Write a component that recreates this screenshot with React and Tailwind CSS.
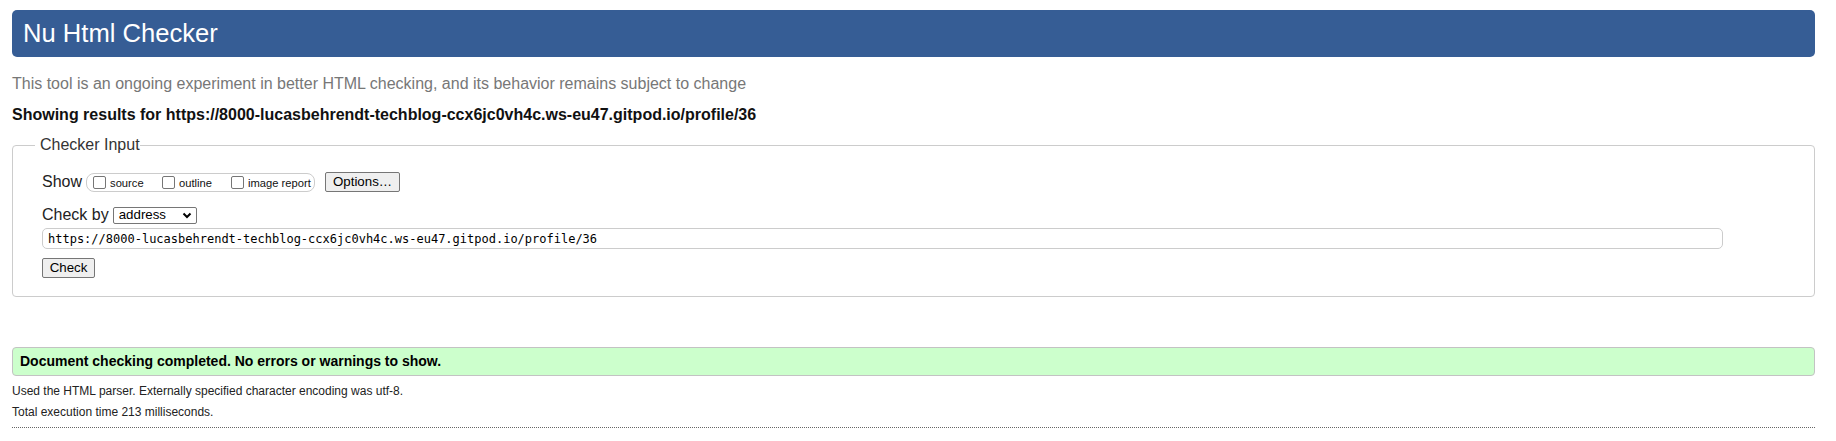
import React from "react";

const url = "https://8000-lucasbehrendt-techblog-ccx6jc0vh4c.ws-eu47.gitpod.io/profile/36";

function Box({ label, width }) {
  return (
    <span className={`flex items-center ${width}`}>
      <span className="w-[13px] h-[13px] border border-[#767676] rounded-[2px] bg-white shrink-0" />
      <span className="ml-[4px] text-[11.2px] leading-[13px] pt-[2px] text-[#111]">{label}</span>
    </span>
  );
}

export default function App() {
  return (
    <div className="w-full h-[441px] bg-white pl-[12px] pr-[21px] pt-[10px] font-['Liberation_Sans',Arial,sans-serif] text-[#222]">
      <div className="h-[47px] rounded-[5px] bg-[#365d95] flex items-center pl-[11px]">
        <h1 className="text-white text-[25.6px] leading-none">Nu Html Checker</h1>
      </div>

      <p className="mt-[17px] text-[16px] leading-[20px] text-[#777]">
        This tool is an ongoing experiment in better HTML checking, and its behavior remains subject to change
      </p>
      <p className="mt-[11px] text-[16px] leading-[20px] font-bold text-[#111]">
        Showing results for {url}
      </p>

      <fieldset className="mt-[10px] border border-[#ccc] rounded-[4px] pl-[29px] pt-[17px] pb-[18px]">
        <legend className="-ml-[7px] pl-[5px] text-[16px] leading-[20px] text-[#333]">Checker Input</legend>

        <div className="flex items-center h-[20px]">
          <span className="text-[16px] text-[#222]">Show</span>
          <div className="ml-[4px] h-[19px] w-[229px] border border-[#ccc] rounded-[8px] flex items-center pl-[6px]">
            <Box label="source" width="w-[69px]" />
            <Box label="outline" width="w-[69px]" />
            <Box label="image report" width="" />
          </div>
          <button className="ml-[10px] h-[20px] w-[75px] bg-[#efefef] border border-[#767676] rounded-[2px] text-[13.3px] leading-none text-black">
            Options…
          </button>
        </div>

        <div className="flex items-center h-[20px] mt-[13px]">
          <span className="text-[16px] text-[#222]">Check by</span>
          <div className="ml-[4px] h-[17px] w-[84px] border border-[#767676] rounded-[2px] flex items-center justify-between pl-[5px] pr-[4px] bg-white">
            <span className="text-[13.3px] leading-none text-black">address</span>
            <svg width="10" height="7" viewBox="0 0 10 7">
              <path d="M1.5 1.5l3.5 3.5 3.5-3.5" fill="none" stroke="#000" strokeWidth="2" />
            </svg>
          </div>
        </div>

        <div className="mt-[3px] h-[21px] w-[1681px] border border-[#ccc] rounded-[5px] flex items-center pl-[5px]">
          <span className="font-['DejaVu_Sans_Mono',monospace] text-[12px] leading-none text-black">{url}</span>
        </div>

        <button className="mt-[9px] block h-[20px] w-[53px] bg-[#efefef] border border-[#767676] rounded-[2px] text-[13.3px] leading-none text-black">
          Check
        </button>
      </fieldset>

      <div className="mt-[50px] h-[29px] border border-[#c3c3c3] rounded-[4px] bg-[#ccffcc] flex items-center pl-[7px]">
        <span className="text-[14px] font-bold text-black">Document checking completed. No errors or warnings to show.</span>
      </div>

      <div className="mt-[5px] text-[12px] leading-[21px] text-[#222]">
        <p>Used the HTML parser. Externally specified character encoding was utf-8.</p>
        <p>Total execution time 213 milliseconds.</p>
      </div>
      <div className="mt-[4px] border-t border-dotted border-[#666]" />
    </div>
  );
}
